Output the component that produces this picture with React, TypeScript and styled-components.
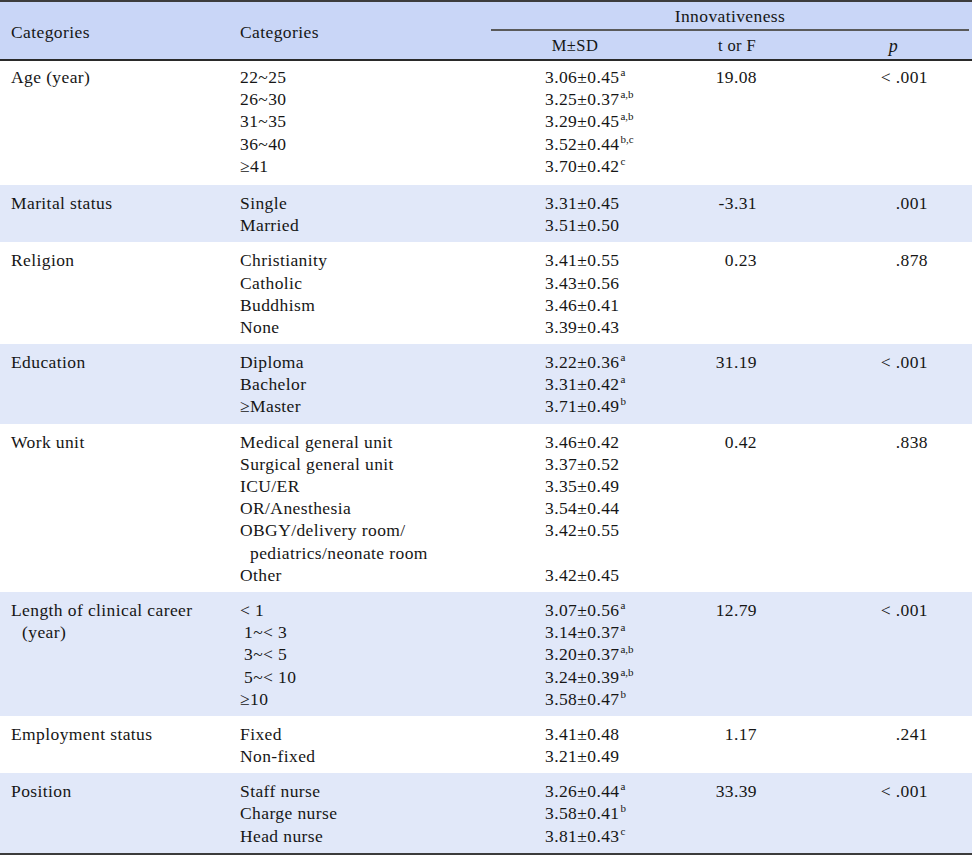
import React from "react";
import styled, { createGlobalStyle } from "styled-components";

const Global = createGlobalStyle`
  html, body { margin: 0; padding: 0; background: #ffffff; }
  body { font-family: "Liberation Serif", "Times New Roman", serif; color: #161616; }
`;

const COLS = "229px 262px 168px 156px 1fr";

const Table = styled.div`
  width: 972px;
  font-size: 17.5px;
  letter-spacing: 0.4px;
  border-top: 2px solid #3c3c3c;
  border-bottom: 2px solid #3c3c3c;
`;

const Head = styled.div`
  display: grid;
  grid-template-columns: ${COLS};
  grid-template-rows: 29px 28px;
  background: #c9d6f7;
  border-bottom: 2px solid #2a2a2a;
  line-height: 22px;
`;

const HeadCat = styled.div<{ $col: number }>`
  grid-column: ${(p) => p.$col};
  grid-row: 1 / span 2;
  display: flex;
  align-items: center;
  padding-left: 11px;
  padding-top: 2px;
`;

const HeadSpan = styled.div`
  grid-column: 3 / span 3;
  grid-row: 1;
  margin-right: 3px;
  border-bottom: 2px solid #5a5a5a;
  display: flex;
  align-items: center;
  justify-content: center;
  padding-top: 1px;
`;

const HeadSub = styled.div<{ $italic?: boolean }>`
  grid-row: 2;
  display: flex;
  align-items: center;
  justify-content: center;
  font-style: ${(p) => (p.$italic ? "italic" : "normal")};
  font-size: ${(p) => (p.$italic ? "18px" : "16.5px")};
  padding-top: 1px;
`;

const Group = styled.div<{ $shaded: boolean; $first?: boolean }>`
  display: grid;
  grid-template-columns: ${COLS};
  background: ${(p) => (p.$shaded ? "#e1e8f9" : "#ffffff")};
  padding: ${(p) => (p.$first ? "5px 0 8px" : "7px 0 6px")};
  line-height: 22.2px;
`;

const Stack = styled.div<{ $pl?: number; $pr?: number; $right?: boolean }>`
  display: flex;
  flex-direction: column;
  padding-left: ${(p) => p.$pl ?? 0}px;
  padding-right: ${(p) => p.$pr ?? 0}px;
  align-items: ${(p) => (p.$right ? "flex-end" : "flex-start")};
`;

const Line = styled.div<{ $indent?: number }>`
  height: 22.2px;
  white-space: pre;
  padding-left: ${(p) => p.$indent ?? 0}px;
`;

const Sup = styled.sup`
  font-size: 11px;
  line-height: 0;
  vertical-align: 7px;
  letter-spacing: 0;
  margin-left: 1px;
`;

type Row = { label: string; indent?: number; m?: string; sup?: string };
type GroupData = {
  cat: { text: string; indent?: number }[];
  rows: Row[];
  t: string;
  p: string;
};

const groups: GroupData[] = [
  {
    cat: [{ text: "Age (year)" }],
    rows: [
      { label: "22~25", m: "3.06±0.45", sup: "a" },
      { label: "26~30", m: "3.25±0.37", sup: "a,b" },
      { label: "31~35", m: "3.29±0.45", sup: "a,b" },
      { label: "36~40", m: "3.52±0.44", sup: "b,c" },
      { label: "≥41", m: "3.70±0.42", sup: "c" },
    ],
    t: "19.08",
    p: "< .001",
  },
  {
    cat: [{ text: "Marital status" }],
    rows: [
      { label: "Single", m: "3.31±0.45" },
      { label: "Married", m: "3.51±0.50" },
    ],
    t: "-3.31",
    p: ".001",
  },
  {
    cat: [{ text: "Religion" }],
    rows: [
      { label: "Christianity", m: "3.41±0.55" },
      { label: "Catholic", m: "3.43±0.56" },
      { label: "Buddhism", m: "3.46±0.41" },
      { label: "None", m: "3.39±0.43" },
    ],
    t: "0.23",
    p: ".878",
  },
  {
    cat: [{ text: "Education" }],
    rows: [
      { label: "Diploma", m: "3.22±0.36", sup: "a" },
      { label: "Bachelor", m: "3.31±0.42", sup: "a" },
      { label: "≥Master", m: "3.71±0.49", sup: "b" },
    ],
    t: "31.19",
    p: "< .001",
  },
  {
    cat: [{ text: "Work unit" }],
    rows: [
      { label: "Medical general unit", m: "3.46±0.42" },
      { label: "Surgical general unit", m: "3.37±0.52" },
      { label: "ICU/ER", m: "3.35±0.49" },
      { label: "OR/Anesthesia", m: "3.54±0.44" },
      { label: "OBGY/delivery room/", m: "3.42±0.55" },
      { label: "pediatrics/neonate room", indent: 10 },
      { label: "Other", m: "3.42±0.45" },
    ],
    t: "0.42",
    p: ".838",
  },
  {
    cat: [{ text: "Length of clinical career" }, { text: "(year)", indent: 11 }],
    rows: [
      { label: "< 1", m: "3.07±0.56", sup: "a" },
      { label: "1~< 3", indent: 4, m: "3.14±0.37", sup: "a" },
      { label: "3~< 5", indent: 4, m: "3.20±0.37", sup: "a,b" },
      { label: "5~< 10", indent: 4, m: "3.24±0.39", sup: "a,b" },
      { label: "≥10", m: "3.58±0.47", sup: "b" },
    ],
    t: "12.79",
    p: "< .001",
  },
  {
    cat: [{ text: "Employment status" }],
    rows: [
      { label: "Fixed", m: "3.41±0.48" },
      { label: "Non-fixed", m: "3.21±0.49" },
    ],
    t: "1.17",
    p: ".241",
  },
  {
    cat: [{ text: "Position" }],
    rows: [
      { label: "Staff nurse", m: "3.26±0.44", sup: "a" },
      { label: "Charge nurse", m: "3.58±0.41", sup: "b" },
      { label: "Head nurse", m: "3.81±0.43", sup: "c" },
    ],
    t: "33.39",
    p: "< .001",
  },
];

export default function App() {
  return (
    <>
      <Global />
      <Table>
        <Head>
          <HeadCat $col={1}>Categories</HeadCat>
          <HeadCat $col={2}>Categories</HeadCat>
          <HeadSpan>Innovativeness</HeadSpan>
          <HeadSub>M±SD</HeadSub>
          <HeadSub>t or F</HeadSub>
          <HeadSub $italic>p</HeadSub>
        </Head>
        {groups.map((g, i) => (
          <Group key={i} $shaded={i % 2 === 1} $first={i === 0}>
            <Stack $pl={11}>
              {g.cat.map((c, j) => (
                <Line key={j} $indent={c.indent}>
                  {c.text}
                </Line>
              ))}
            </Stack>
            <Stack $pl={11}>
              {g.rows.map((r, j) => (
                <Line key={j} $indent={r.indent}>
                  {r.label}
                </Line>
              ))}
            </Stack>
            <Stack $pl={54}>
              {g.rows.map((r, j) => (
                <Line key={j}>
                  {r.m ?? ""}
                  {r.sup ? <Sup>{r.sup}</Sup> : null}
                </Line>
              ))}
            </Stack>
            <Stack $right $pr={58}>
              <Line>{g.t}</Line>
            </Stack>
            <Stack $right $pr={44}>
              <Line>{g.p}</Line>
            </Stack>
          </Group>
        ))}
      </Table>
    </>
  );
}
